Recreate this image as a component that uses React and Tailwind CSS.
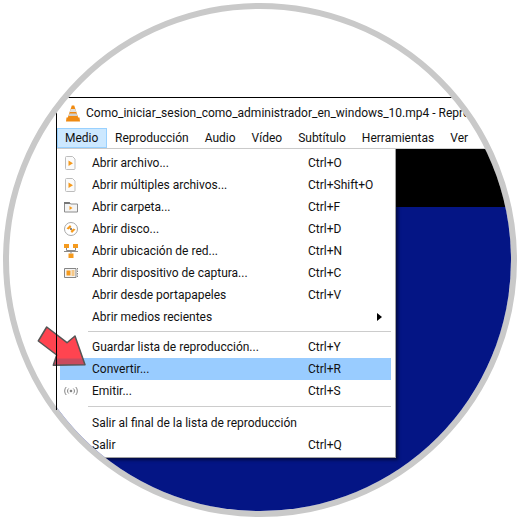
import React from "react";

const FONT = "font-['Roboto','Noto_Sans',sans-serif]";

const PlayFile = () => (
  <svg width="16" height="16" viewBox="0 0 16 16">
    <path d="M3.500 1.500h6l2.500 2.500v9.500a1 1 0 0 1-1 1h-7.500a1 1 0 0 1-1-1v-11a1 1 0 0 1 1-1z" fill="#fbfbfb" stroke="#bdbdbd" />
    <path d="M5.500 5.500l4.500 2.800-4.500 2.800z" fill="#f59a1d" />
  </svg>
);

const Folder = () => (
  <svg width="16" height="16" viewBox="0 0 16 16">
    <path d="M1.500 3.500h5l1 1.500h7v8h-13z" fill="#f4f4f4" stroke="#8c8c8c" />
    <path d="M1 3h5.500l1 2h-6.500z" fill="#777" />
    <path d="M6.500 7l3 2-3 2z" fill="#f59a1d" />
  </svg>
);

const Disc = () => (
  <svg width="16" height="16" viewBox="0 0 16 16">
    <circle cx="8" cy="8" r="6.500" fill="#fff" stroke="#a8a8a8" />
    <path d="M3.500 7.500l3.500-3.500 1.500 2-3 2.500z" fill="#f59a1d" />
    <path d="M12.500 8.500l-3.500 3.500-1.500-2 3-2.500z" fill="#f59a1d" />
    <circle cx="8" cy="8" r="1.100" fill="#666" />
  </svg>
);

const Network = () => (
  <svg width="16" height="16" viewBox="0 0 16 16">
    <path d="M1 1h5v4h-5zM10 1h5v4h-5zM5.500 10.500h5v4.500h-5z" fill="#f59a1d" />
    <path d="M3.500 5v2.500h9V5M8 7.500v3M1 8.500h14" fill="none" stroke="#8a8a8a" />
  </svg>
);

const Capture = () => (
  <svg width="16" height="16" viewBox="0 0 16 16">
    <path d="M1.500 3.500h11.500v9h-11.500z" fill="#f4f4f4" stroke="#858585" />
    <path d="M3.500 5.500h4v5h-4z" fill="#f59a1d" />
    <path d="M8.500 6h3M8.500 8h3M8.500 10h3" stroke="#f59a1d" />
    <path d="M14.500 3v10" stroke="#858585" strokeDasharray="1.500 1" />
  </svg>
);

const Broadcast = () => (
  <svg width="16" height="16" viewBox="0 0 16 16" fill="none" stroke="#777" strokeWidth="0.9">
    <circle cx="8" cy="8" r="0.900" fill="#777" />
    <path d="M5.700 5.500a3.300 3.300 0 0 0 0 5M10.300 5.500a3.300 3.300 0 0 1 0 5M3.200 4a6 6 0 0 0 0 8M12.800 4a6 6 0 0 1 0 8" />
  </svg>
);

const Cone = () => (
  <svg width="14" height="17" viewBox="0 0 14 17">
    <path d="M5.800 0.500h2.400l4.300 13h-11z" fill="#f08a10" />
    <path d="M4.700 4h4.600l1 3h-6.600z" fill="#dedede" />
    <path d="M3.500 8.500h7l0.900 2.500h-8.800z" fill="#cfcfcf" />
    <path d="M0.500 12.500h13l0.500 4h-14z" fill="#ef8a12" />
  </svg>
);

const menuTop = [
  { icon: <PlayFile />, label: "Abrir archivo...", key: "Ctrl+O" },
  { icon: <PlayFile />, label: "Abrir múltiples archivos...", key: "Ctrl+Shift+O" },
  { icon: <Folder />, label: "Abrir carpeta...", key: "Ctrl+F" },
  { icon: <Disc />, label: "Abrir disco...", key: "Ctrl+D" },
  { icon: <Network />, label: "Abrir ubicación de red...", key: "Ctrl+N" },
  { icon: <Capture />, label: "Abrir dispositivo de captura...", key: "Ctrl+C" },
  { label: "Abrir desde portapapeles", key: "Ctrl+V" },
  { label: "Abrir medios recientes", sub: true },
];

const menuMid = [
  { label: "Guardar lista de reproducción...", key: "Ctrl+Y" },
  { label: "Convertir...", key: "Ctrl+R", active: true },
  { icon: <Broadcast />, label: "Emitir...", key: "Ctrl+S" },
];

const menuEnd = [
  { label: "Salir al final de la lista de reproducción" },
  { label: "Salir", key: "Ctrl+Q" },
];

const Row = ({ icon, label, shortcut, sub, active }) => (
  <div className={`flex h-[22px] items-center mr-[4px] ${active ? "bg-[#99ccff]" : ""}`}>
    <div className="w-[32px] pl-[3px] flex items-center shrink-0">{icon}</div>
    <div className="w-[216px] shrink-0 whitespace-nowrap">{label}</div>
    <div className="flex-1 whitespace-nowrap">{shortcut}</div>
    {sub && <div className="mr-[9px] w-0 h-0 border-y-[4px] border-y-transparent border-l-[5px] border-l-black" />}
  </div>
);

const Rows = ({ items }) =>
  items.map((it) => (
    <Row key={it.label} icon={it.icon} label={it.label} shortcut={it.key} sub={it.sub} active={it.active} />
  ));

export default function App() {
  return (
    <div className={`relative w-[520px] h-[520px] bg-white flex items-center justify-center text-[12px] text-[#111] ${FONT}`}>
      <div className="w-[514px] h-[514px] rounded-full border-[6px] border-[#c9c9c9] overflow-hidden bg-white">
        <div className="ml-[47px] mt-[88px] w-[640px] h-[500px] border-l border-t border-black flex flex-col relative">
          <div className="h-[30px] flex items-center pl-[9px] gap-[6px] shrink-0">
            <Cone />
            <span className="whitespace-nowrap">Como_iniciar_sesion_como_administrador_en_windows_10.mp4 - Reproductor multimedia VLC</span>
          </div>
          <div className="h-[21px] flex shrink-0 border-b border-[#d0d0d0]">
            <div className="w-[50px] px-[7px] h-[20px] flex items-center bg-[#cce8ff] border border-[#99d1ff]">Medio</div>
            {["Reproducción", "Audio", "Vídeo", "Subtítulo", "Herramientas", "Ver", "Ayuda"].map((m) => (
              <div key={m} className="px-[8px] h-[20px] flex items-center">{m}</div>
            ))}
          </div>
          <div className="h-[58px] bg-black shrink-0" />
          <div className="flex-1 bg-[#041585]" />

          <div className="absolute left-0 top-[51px] w-[339px] h-[309px] bg-white border-r border-b border-[#a0a0a0] shadow-[2px_2px_3px_rgba(0,0,0,0.5)] pt-[3px] pl-[3px]">
            <Rows items={menuTop} />
            <div className="h-[8px] ml-[28px] mr-[4px] pt-[3px]"><div className="h-px bg-[#cccccc]" /></div>
            <Rows items={menuMid} />
            <div className="h-[10px] ml-[28px] mr-[4px] pt-[4px]"><div className="h-px bg-[#cccccc]" /></div>
            <Rows items={menuEnd} />
          </div>
        </div>
      </div>

      {/* flecha roja sobre el menu */}
      <svg className="absolute left-0 top-0" width="520" height="520" viewBox="0 0 520 520">
        <path d="M46.700 327L38.300 341L56.700 355L53.300 365.300L85 364.700L75 336L67 342.700z" fill="#ff4450" />
        <path d="M55.500 358.500H82.800L85 364.700L53.300 365.300z" fill="#c94a5e" />
        <path d="M46.700 327L38.300 341L56.700 355L53.300 365.300L85 364.700L75 336L67 342.700z" fill="none" stroke="#555" strokeWidth="1.500" strokeLinejoin="round" />
        <path d="M56.500 322V410" stroke="#000" strokeWidth="1" />
      </svg>
    </div>
  );
}
